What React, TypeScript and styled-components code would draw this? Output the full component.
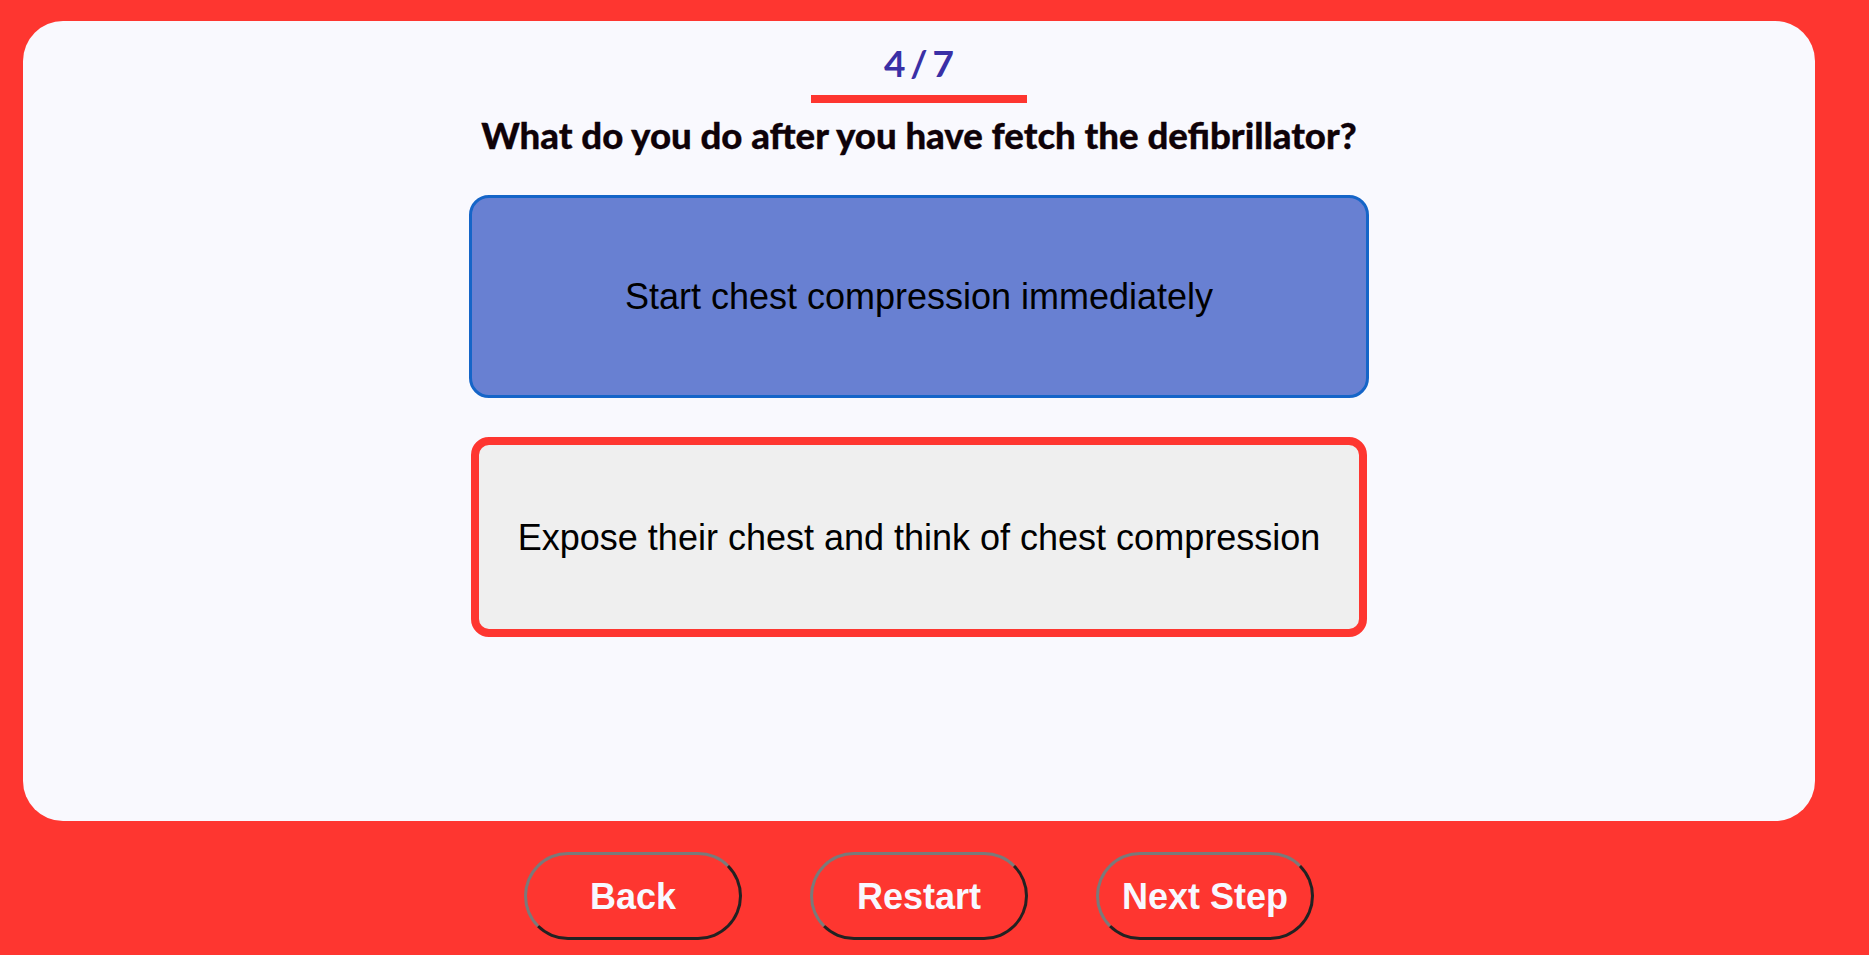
import React from "react";
import styled, { createGlobalStyle } from "styled-components";

const GlobalStyle = createGlobalStyle`
  html, body {
    margin: 0;
    padding: 0;
    background: #fe3630;
  }
  * { box-sizing: border-box; }
`;

const Page = styled.div`
  min-height: 955px;
  background: #fe3630;
  padding: 21px 0 15px 23px;
  display: flex;
  flex-direction: column;
`;

const Card = styled.main`
  width: 1792px;
  height: 800px;
  background: #f9f9fe;
  border-radius: 40px;
  padding-top: 20px;
  display: flex;
  flex-direction: column;
  align-items: center;
`;

const Counter = styled.div`
  font-family: Lato, "Liberation Sans", sans-serif;
  font-weight: 700;
  font-size: 37px;
  line-height: 44px;
  color: #3a30a6;
  word-spacing: -4px;
`;

const CounterBar = styled.div`
  width: 216px;
  height: 8px;
  margin-top: 10px;
  background: #fe3630;
`;

const Question = styled.h1`
  margin: 11px 0 0;
  font-family: Lato, "Liberation Sans", sans-serif;
  font-weight: 900;
  font-size: 36.6px;
  line-height: 43px;
  color: #0f0208;
  -webkit-text-stroke: 0.3px #0f0208;
`;

const Options = styled.div`
  display: flex;
  flex-direction: column;
  align-items: center;
  margin-top: 38px;
  gap: 39px;
`;

const Option = styled.button<{ $state: "selected" | "wrong" }>`
  display: flex;
  align-items: center;
  justify-content: center;
  width: ${(p) => (p.$state === "selected" ? "900px" : "896px")};
  height: ${(p) => (p.$state === "selected" ? "203px" : "200px")};
  border-radius: ${(p) => (p.$state === "selected" ? "20px" : "18px")};
  border: ${(p) =>
    p.$state === "selected" ? "3px solid #1565c8" : "8px solid #fe3630"};
  background: ${(p) => (p.$state === "selected" ? "#6880d2" : "#efefef")};
  font-family: "Liberation Sans", Arial, sans-serif;
  font-size: 36px;
  line-height: 41px;
  color: #000;
  cursor: pointer;
  padding: 0 20px;
`;

const Controls = styled.nav`
  width: 1792px;
  margin-top: 31px;
  display: flex;
  justify-content: center;
  gap: 68px;
`;

const NavButton = styled.button`
  width: 218px;
  height: 88px;
  border-radius: 44px;
  border: 3px solid;
  border-color: #7a7a7a #222 #222 #7a7a7a;
  background: #fe3630;
  color: #f8f8ff;
  font-family: "Liberation Sans", Arial, sans-serif;
  font-weight: 700;
  font-size: 36px;
  line-height: 41px;
  cursor: pointer;
  padding: 0;
`;

export default function App() {
  return (
    <>
      <GlobalStyle />
      <Page>
        <Card>
          <Counter>4 / 7</Counter>
          <CounterBar />
          <Question>What do you do after you have fetch the defibrillator?</Question>
          <Options>
            <Option $state="selected">Start chest compression immediately</Option>
            <Option $state="wrong">Expose their chest and think of chest compression</Option>
          </Options>
        </Card>
        <Controls>
          <NavButton>Back</NavButton>
          <NavButton>Restart</NavButton>
          <NavButton>Next Step</NavButton>
        </Controls>
      </Page>
    </>
  );
}
